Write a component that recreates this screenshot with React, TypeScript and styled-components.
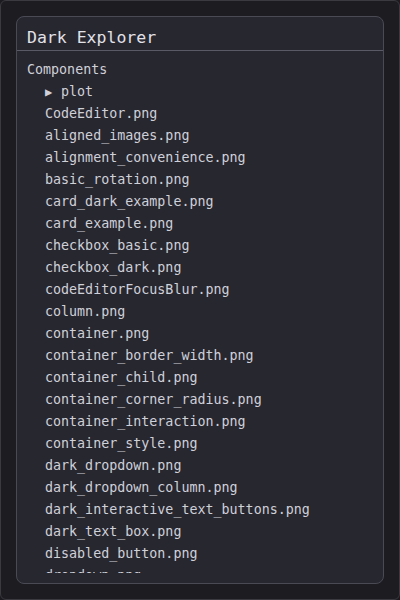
import styled, { createGlobalStyle } from "styled-components";

const GlobalStyle = createGlobalStyle`
  html, body {
    margin: 0;
    padding: 0;
    background: #1b1b20;
  }
  * {
    box-sizing: border-box;
  }
`;

const Frame = styled.div`
  width: 400px;
  height: 600px;
  padding: 15px;
  background: #1c1c21;
  border: 1px solid #3a3a40;
  border-radius: 6px;
  display: flex;
`;

const Panel = styled.div`
  flex: 1;
  display: flex;
  flex-direction: column;
  background: #272730;
  border: 1px solid #4a4a55;
  border-radius: 8px;
  overflow: hidden;
  font-family: "DejaVu Sans Mono", monospace;
`;

const Header = styled.div`
  height: 34px;
  padding: 7px 10px 0;
  display: flex;
  align-items: center;
  border-bottom: 1px solid #5a5a66;
  color: #e2e2ea;
  font-size: 16.5px;
`;

const ListArea = styled.div`
  margin: 8px 0 10px;
  flex: 1;
  overflow: hidden;
`;

const Row = styled.div<{ $depth: number }>`
  height: 22px;
  line-height: 22px;
  padding-left: ${(p) => 10 + p.$depth * 18}px;
  color: #d0d0d8;
  font-size: 13.33px;
  white-space: nowrap;
`;

const Arrow = styled.span`
  font-size: 12px;
  display: inline-block;
  width: 16px;
`;

const files = [
  "CodeEditor.png",
  "aligned_images.png",
  "alignment_convenience.png",
  "basic_rotation.png",
  "card_dark_example.png",
  "card_example.png",
  "checkbox_basic.png",
  "checkbox_dark.png",
  "codeEditorFocusBlur.png",
  "column.png",
  "container.png",
  "container_border_width.png",
  "container_child.png",
  "container_corner_radius.png",
  "container_interaction.png",
  "container_style.png",
  "dark_dropdown.png",
  "dark_dropdown_column.png",
  "dark_interactive_text_buttons.png",
  "dark_text_box.png",
  "disabled_button.png",
  "dropdown.png",
  "dropdown_dark.png",
];

export default function App() {
  return (
    <>
      <GlobalStyle />
      <Frame>
        <Panel>
          <Header>Dark Explorer</Header>
          <ListArea>
            <Row $depth={0}>Components</Row>
            <Row $depth={1}>
              <Arrow>▶</Arrow>plot
            </Row>
            {files.map((f) => (
              <Row key={f} $depth={1}>
                {f}
              </Row>
            ))}
          </ListArea>
        </Panel>
      </Frame>
    </>
  );
}
